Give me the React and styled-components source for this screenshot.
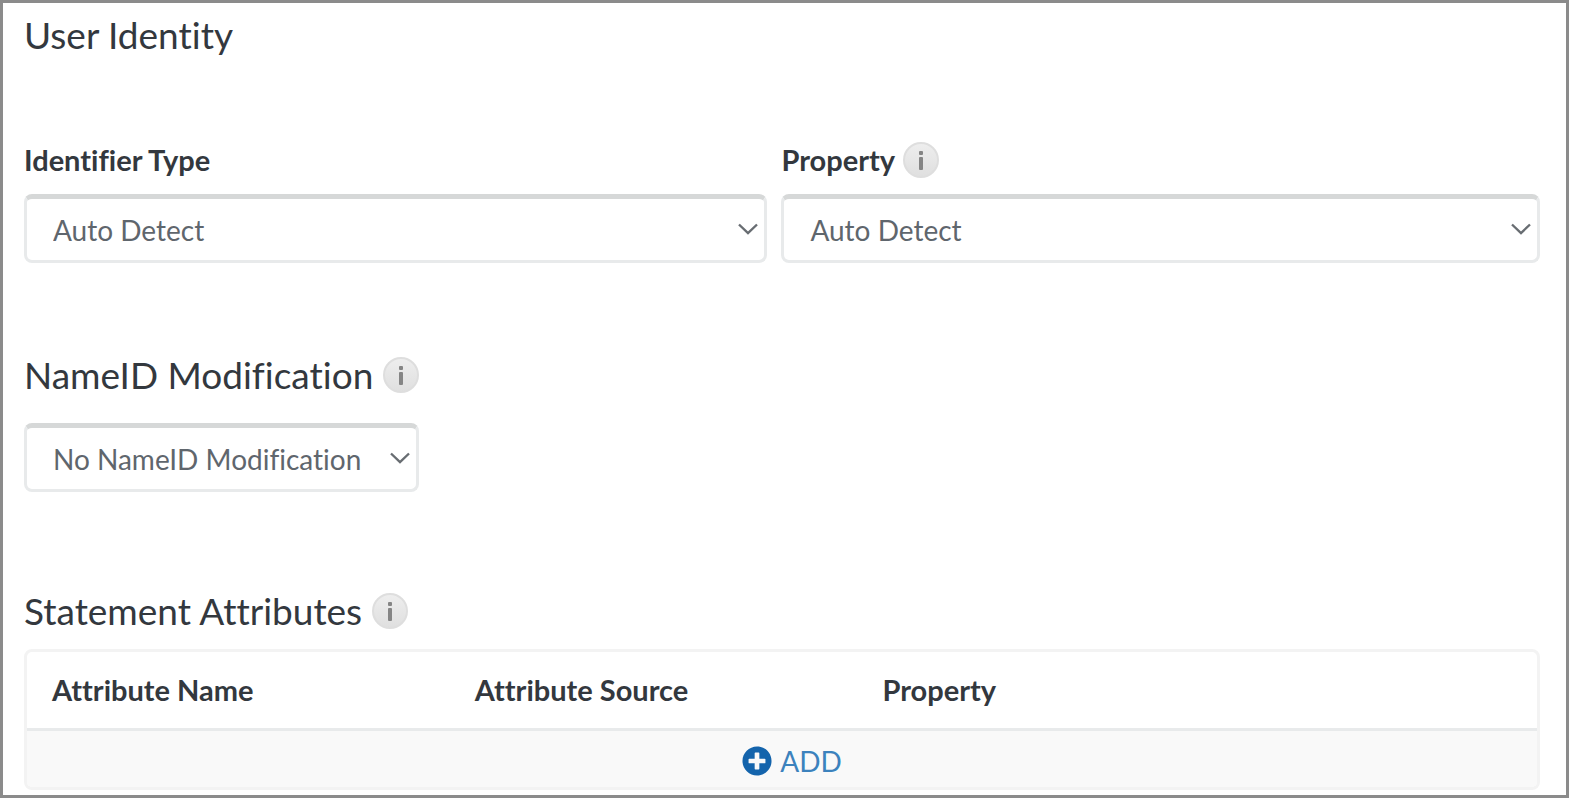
import React, { useState } from 'react'
import styled, { createGlobalStyle } from 'styled-components'
import { FaPlusCircle } from 'react-icons/fa'

const colors = {
  text: '#33383e',
  input: '#5f666d',
  frame: '#8b8b8b',
  border: '#e8eaeb',
  borderTop: '#d6d8d8',
  tableBorder: '#f3f3f3',
  link: '#1464ac'
}

const GlobalStyle = createGlobalStyle`
  * {
    box-sizing: border-box;
  }

  body {
    margin: 0;
    background-color: #ffffff;
    color: ${colors.text};
    font-family: Lato, sans-serif;
    font-size: 28px;
    line-height: 36px;
    font-variant-ligatures: none;
  }
`

const Panel = styled.main`
  min-height: 100vh;
  border: 3px solid ${colors.frame};
  padding: 8px 26px 4px 21px;
`

const Section = styled.section`
  margin-top: ${props => props.$space || 0}px;
`

const TitleRow = styled.div`
  display: flex;
  align-items: center;
  gap: 10px;
  margin-bottom: ${props => props.$space}px;
`

const Title = styled.h2`
  margin: 0;
  font-size: 37px;
  font-weight: 400;
  line-height: 48px;
`

const Fields = styled.div`
  display: grid;
  grid-template-columns: 49fr 50fr;
  align-items: end;
  gap: 14px;
`

const LabelRow = styled.div`
  display: flex;
  align-items: center;
  gap: 8px;
  margin-bottom: 16px;
`

const Label = styled.label`
  font-size: 29px;
  font-weight: 700;
`

const SelectWrapper = styled.div`
  position: relative;
  width: ${props => props.$fit ? 'max-content' : '100%'};
`

const Select = styled.select`
  display: block;
  appearance: none;
  width: 100%;
  height: 69px;
  border: 3px solid ${colors.border};
  border-top: 5px solid ${colors.borderTop};
  border-radius: 8px;
  padding: 0 54px 0 26px;
  background-color: #ffffff;
  color: ${colors.input};
  font-family: inherit;
  font-size: 28px;
  font-variant-ligatures: none;
  line-height: 36px;
`

const Chevron = styled.svg`
  position: absolute;
  top: 28px;
  right: 8px;
  width: 22px;
  height: 14px;
  pointer-events: none;
`

const InfoBtn = styled.button`
  flex: none;
  width: 36px;
  height: 36px;
  border: 0;
  padding: 0;
  background: none;
  cursor: pointer;

  svg {
    display: block;
  }
`

const TableWrapper = styled.div`
  border: 3px solid ${colors.tableBorder};
  border-radius: 8px;
  overflow: hidden;
`

const Table = styled.table`
  width: 100%;
  border-collapse: collapse;
  table-layout: fixed;
`

const HeaderCell = styled.th`
  width: ${props => props.$width};
  height: 77px;
  border-bottom: 3px solid ${colors.border};
  padding: 0 0 0 25px;
  font-size: 29px;
  font-weight: 700;
  text-align: left;
`

const FooterCell = styled.td`
  height: 58px;
  padding: 0 0 0 20px;
  background-color: #f9f9f9;
  text-align: center;
`

const AddBtn = styled.button`
  display: inline-flex;
  align-items: center;
  gap: 8px;
  border: 0;
  padding: 4px 0 0;
  background: none;
  color: ${colors.link};
  font-family: inherit;
  font-size: 28px;
  line-height: 36px;
  vertical-align: top;
  cursor: pointer;
`

const AddText = styled.span`
  color: #3c82bd;
`

const Info = ({ label }) => (
  <InfoBtn type="button" aria-label={label}>
    <svg width="36" height="36" viewBox="0 0 36 36" aria-hidden="true">
      <defs>
        <linearGradient id="info-fill" x1="0" y1="0" x2="0" y2="1">
          <stop offset="0" stopColor="#eeeeee" />
          <stop offset="1" stopColor="#dfdfdf" />
        </linearGradient>
      </defs>
      <circle cx="18" cy="18" r="17" fill="url(#info-fill)" stroke="#dedede" strokeWidth="2" />
      <rect x="16" y="9" width="4" height="4" rx="1" fill="#858585" />
      <rect x="16" y="15" width="4" height="13" rx="1" fill="#858585" />
    </svg>
  </InfoBtn>
)

const Dropdown = ({ id, options, fit, label }) => {
  const [value, setValue] = useState(options[0])

  return (
    <SelectWrapper $fit={fit}>
      <Select id={id} aria-labelledby={label} value={value} onChange={e => setValue(e.target.value)}>
        {options.map(option => <option key={option}>{option}</option>)}
      </Select>
      <Chevron viewBox="0 0 22 14" fill="none" stroke="#686d72" strokeWidth="2.4" aria-hidden="true">
        <path d="M2 2.5L11 11L20 2.5" />
      </Chevron>
    </SelectWrapper>
  )
}

const App = () => (
  <>
    <GlobalStyle />
    <Panel>
      <Section>
        <TitleRow $space={83}>
          <Title>User Identity</Title>
        </TitleRow>
        <Fields>
          <div>
            <LabelRow>
              <Label htmlFor="identifier-type">Identifier Type</Label>
            </LabelRow>
            <Dropdown id="identifier-type" options={['Auto Detect']} />
          </div>
          <div>
            <LabelRow>
              <Label htmlFor="property">Property</Label>
              <Info label="About property" />
            </LabelRow>
            <Dropdown id="property" options={['Auto Detect']} />
          </div>
        </Fields>
      </Section>

      <Section $space={88}>
        <TitleRow $space={24}>
          <Title id="nameid-title">NameID Modification</Title>
          <Info label="About NameID modification" />
        </TitleRow>
        <Dropdown id="nameid" label="nameid-title" options={['No NameID Modification']} fit />
      </Section>

      <Section $space={95}>
        <TitleRow $space={14}>
          <Title>Statement Attributes</Title>
          <Info label="About statement attributes" />
        </TitleRow>
        <TableWrapper>
          <Table>
            <thead>
              <tr>
                <HeaderCell $width="28%">Attribute Name</HeaderCell>
                <HeaderCell $width="27%">Attribute Source</HeaderCell>
                <HeaderCell>Property</HeaderCell>
              </tr>
            </thead>
            <tbody>
              <tr>
                <FooterCell colSpan={3}>
                  <AddBtn type="button">
                    <FaPlusCircle size={30} aria-hidden="true" />
                    <AddText>ADD</AddText>
                  </AddBtn>
                </FooterCell>
              </tr>
            </tbody>
          </Table>
        </TableWrapper>
      </Section>
    </Panel>
  </>
)

export default App
